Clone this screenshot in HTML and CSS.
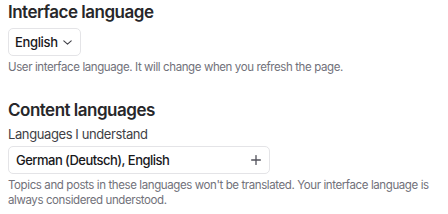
FILE: index.html
```html
<!DOCTYPE html>
<html>
<head>
<meta charset="utf-8">
<link rel="stylesheet" href="styles.css">
</head>
<body>
<div class="page">
  <section class="section">
    <h2 class="title">Interface language</h2>
    <button class="select">
      <span>English</span>
      <svg class="chev" width="9" height="5" viewBox="0 0 9 5"><path d="M0.8 0.8 L4.5 4.2 L8.2 0.8" fill="none" stroke="#3f3f46" stroke-width="1.1" stroke-linecap="round" stroke-linejoin="round"/></svg>
    </button>
    <p class="help">User interface language. It will change when you refresh the page.</p>
  </section>
  <section class="section second">
    <h2 class="title">Content languages</h2>
    <div class="label">Languages I understand</div>
    <div class="input">
      <span>German (Deutsch), English</span>
      <svg class="plus" width="10" height="10" viewBox="0 0 10 10"><path d="M5 0.6 V9.4 M0.6 5 H9.4" fill="none" stroke="#52525b" stroke-width="1.3" stroke-linecap="round"/></svg>
    </div>
    <p class="help help-wide">Topics and posts in these languages won't be translated. Your interface language is always considered understood.</p>
  </section>
</div>
</body>
</html>
```
FILE: styles.css
```css
* { box-sizing: border-box; }
html, body { margin: 0; padding: 0; background: #fff; }
body { font-family: Inter, "Noto Sans", sans-serif; color: #27272a; }
.page { padding: 0 8px; }
.section { display: flex; flex-direction: column; align-items: flex-start; }
.second { margin-top: 23px; }
.title { margin: 0; font-size: 17px; line-height: 24px; font-weight: 600; letter-spacing: -0.5px; color: #27272a; }
.select {
  margin-top: 4px;
  display: flex; align-items: center; gap: 5px;
  height: 28px; padding: 0 8px 0 6px;
  border: 1px solid #e4e4e7; border-radius: 5px; background: #fff;
  font-family: inherit; font-size: 13px; font-weight: 500; letter-spacing: -0.35px; color: #18181b;
}
.chev { margin-top: 1px; }
.help { margin: 3px 0 0 0; font-size: 11.5px; line-height: 16px; letter-spacing: -0.4px; color: #71717a; }
.label { margin-top: 2px; font-size: 13px; line-height: 20px; letter-spacing: -0.4px; color: #3f3f46; }
.input {
  margin-top: 2px;
  width: 262px; height: 28px;
  display: flex; align-items: center; justify-content: space-between;
  padding: 0 8px 0 7px;
  border: 1px solid #e4e4e7; border-radius: 5px;
  font-size: 13px; font-weight: 500; letter-spacing: -0.52px; color: #18181b;
}
.help-wide { margin-top: 4px; line-height: 15px; max-width: 425px; }
```
